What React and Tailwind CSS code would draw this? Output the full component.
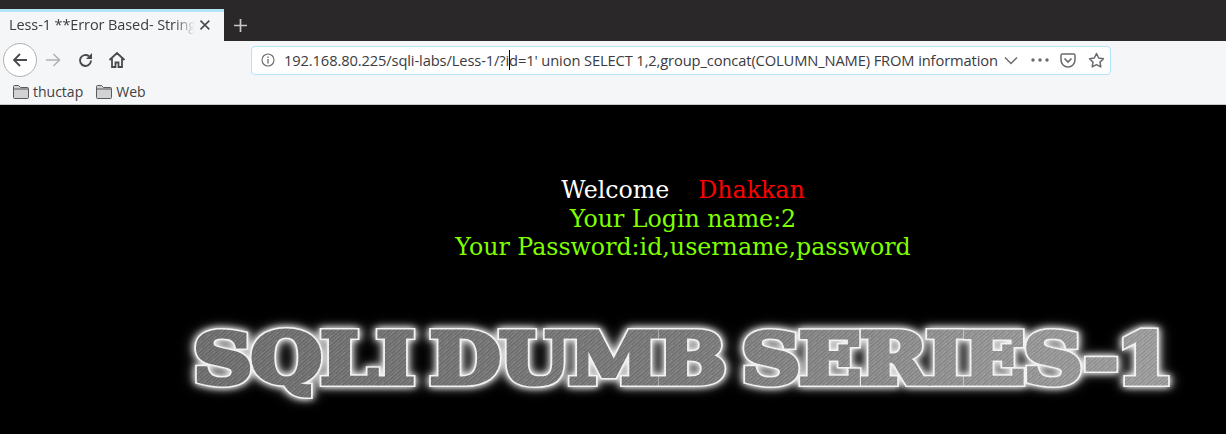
const ui = { fontFamily: '"Open Sans","Noto Sans",sans-serif' };

function Folder() {
  return (
    <svg width="18" height="15" viewBox="0 0 18 15" className="shrink-0">
      <path d="M1.5 13.5V2.5a1 1 0 0 1 1-1h4l2 2h7a1 1 0 0 1 1 1v9a1 1 0 0 1-1 1h-13a1 1 0 0 1-1-1z" fill="#d2d2d4" stroke="#5b5b5f" strokeWidth="1" />
      <path d="M2 5h14" stroke="#5b5b5f" strokeWidth="1" />
    </svg>
  );
}

export default function App() {
  return (
    <div className="w-[1226px] h-[434px] overflow-hidden bg-black flex flex-col">
      <div className="h-[41px] bg-[#2a2829] flex items-end shrink-0" style={ui}>
        <div className="w-[224px] h-[32px] bg-[#f5f6f7] border-t-[3px] border-[#b4e4f8] flex items-center pl-[9px] pr-[13px] pb-[3px] shrink-0">
          <span className="text-[#3c3c40] text-[14.5px] whitespace-nowrap overflow-hidden w-[190px] tracking-[-0.1px] [mask-image:linear-gradient(to_right,black_165px,transparent_186px)]">Less-1 **Error Based- String</span>
          <svg width="12" height="12" viewBox="0 0 12 12" className="ml-[4px]"><path d="M1.5 1.5l9 9M10.5 1.5l-9 9" stroke="#4a4a4f" strokeWidth="1.6" /></svg>
        </div>
        <div className="flex-1 h-[32px] flex items-center pl-[9px]">
          <svg width="15" height="15" viewBox="0 0 15 15"><path d="M7.5 1v13M1 7.5h13" stroke="#c8c8ca" strokeWidth="1.7" /></svg>
        </div>
      </div>

      <div className="h-[38px] bg-[#f5f6f7] flex items-center shrink-0" style={ui}>
        <div className="ml-[3px] w-[34px] h-[34px] rounded-full border border-[#b1b1b3] bg-white flex items-center justify-center shrink-0">
          <svg width="18" height="18" viewBox="0 0 18 18"><path d="M16 9H3M9 3L3 9l6 6" fill="none" stroke="#4a4a4f" strokeWidth="1.8" /></svg>
        </div>
        <svg width="18" height="18" viewBox="0 0 18 18" className="ml-[7px] shrink-0"><path d="M2 9h13M9.5 3l6 6-6 6" fill="none" stroke="#b1b1b3" strokeWidth="1.6" /></svg>
        <svg width="17" height="17" viewBox="0 0 17 17" className="ml-[15px] shrink-0"><path d="M14 8.5A5.5 5.5 0 1 1 12 4.2" fill="none" stroke="#4a4a4f" strokeWidth="1.9" /><path d="M15 1v6h-6z" fill="#4a4a4f" /></svg>
        <svg width="18" height="18" viewBox="0 0 18 18" className="ml-[14px] shrink-0"><path d="M1.5 9L9 2l7.500 7M4 7.500V16h3.500v-4.500h3V16H14V7.500" fill="none" stroke="#4a4a4f" strokeWidth="1.8" /></svg>
        <div className="ml-[125px] w-[860px] h-[29px] bg-white rounded-[4px] border border-[#b5e3f7] flex items-center pl-[9px] pr-[5px] shrink-0">
          <svg width="14" height="14" viewBox="0 0 14 14" className="shrink-0"><circle cx="7" cy="7" r="6" fill="none" stroke="#6a6a6f" strokeWidth="1.100" /><path d="M7 6v4.500M7 3.500v1.400" stroke="#6a6a6f" strokeWidth="1.300" /></svg>
          <div className="ml-[9px] w-[714px] text-[14.7px] whitespace-nowrap overflow-hidden text-[#3b3b40] tracking-[-0.12px] shrink-0">
            192.168.80.225/sqli-labs/Less-1/?i<span className="border-l border-black -mr-px"></span>d=1' union SELECT 1,2,group_concat(COLUMN_NAME) FROM information
          </div>
          <svg width="14" height="9" viewBox="0 0 14 9" className="ml-[6px] shrink-0"><path d="M1 1.500l6 6 6-6" fill="none" stroke="#6a6a6f" strokeWidth="1.500" /></svg>
          <svg width="18" height="4" viewBox="0 0 18 4" className="ml-[13px] shrink-0"><circle cx="2" cy="2" r="1.700" fill="#6a6a6f" /><circle cx="9" cy="2" r="1.700" fill="#6a6a6f" /><circle cx="16" cy="2" r="1.700" fill="#6a6a6f" /></svg>
          <svg width="16" height="15" viewBox="0 0 16 15" className="ml-[11px] shrink-0"><path d="M1 2.500a1.500 1.500 0 0 1 1.500-1.500h11A1.500 1.500 0 0 1 15 2.500V7a7 7 0 0 1-14 0z" fill="none" stroke="#6a6a6f" strokeWidth="1.500" /><path d="M4.500 5.500L8 9l3.500-3.500" fill="none" stroke="#6a6a6f" strokeWidth="1.700" /></svg>
          <svg width="17" height="16" viewBox="0 0 17 16" className="ml-[12px] shrink-0"><path d="M8.500 1.500l2.200 4.500 4.800.7-3.500 3.400.8 4.800-4.300-2.300-4.300 2.300.8-4.800L1.500 6.700l4.800-.7z" fill="none" stroke="#6a6a6f" strokeWidth="1.500" strokeLinejoin="round" /></svg>
        </div>
      </div>

      <div className="h-[26px] bg-[#f5f6f7] border-b border-[#c8c8ca] flex items-center pl-[12px] text-[14px] text-[#3f3f44] shrink-0" style={ui}>
        <Folder />
        <span className="ml-[3px]">thuctap</span>
        <span className="ml-[12px]"><Folder /></span>
        <span className="ml-[3px]">Web</span>
      </div>

      <div className="flex-1 bg-black pl-[140px] pt-[71px]" style={{ fontFamily: '"DejaVu Serif",serif' }}>
        <div className="text-center text-[23.7px] leading-[28.500px]">
          <div><span className="text-white">Welcome</span><span className="text-[#ff0000] ml-[29px]">Dhakkan</span></div>
          <div className="text-[#7fff00]">Your Login name:2</div>
          <div className="text-[#7fff00]">Your Password:id,username,password</div>
        </div>
        <div className="mt-[58px] flex justify-center">
          <div
            data-t="SQLI DUMB SERIES-1"
            className="relative whitespace-nowrap font-bold text-[70px] leading-[78px] tracking-[-1px] [word-spacing:-9px] text-white [-webkit-text-stroke:8px_#f2f2f2] [stroke-linejoin:round] [filter:drop-shadow(0_0_3px_#ffffff)_drop-shadow(0_0_5px_rgba(255,255,255,0.6))] origin-center scale-x-[1.16] after:content-[attr(data-t)] after:absolute after:inset-0 after:whitespace-nowrap after:text-transparent after:bg-clip-text after:[-webkit-text-stroke:5px_transparent] after:bg-[repeating-linear-gradient(135deg,rgba(255,255,255,0.14)_0px,rgba(0,0,0,0.12)_2px,rgba(255,255,255,0.06)_3px,rgba(0,0,0,0.1)_5px),linear-gradient(90deg,#707070_0%,#7c7c7c_50%,#989898_80%,#a2a2a2_100%)]"
          >
            SQLI DUMB SERIES-1
          </div>
        </div>
      </div>
    </div>
  );
}
